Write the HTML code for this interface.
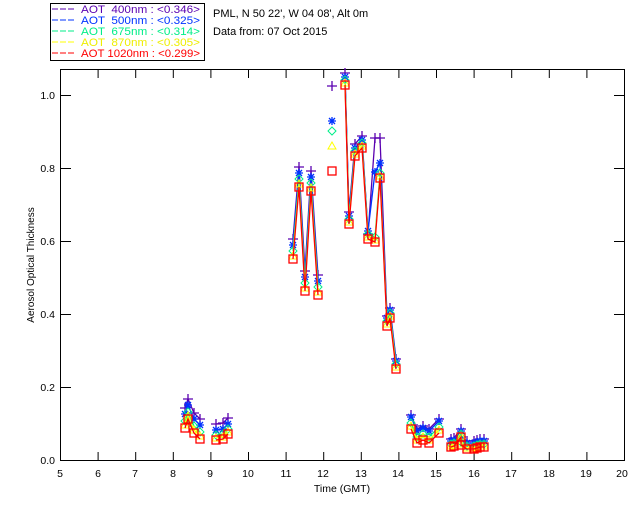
<!DOCTYPE html>
<html><head><meta charset="utf-8"><style>
html,body{margin:0;padding:0;background:#fff;width:640px;height:512px;overflow:hidden}
svg{display:block;font-family:"Liberation Sans","DejaVu Sans",sans-serif}
</style></head><body>
<svg id="s" width="640" height="512" viewBox="0 0 640 512" xmlns="http://www.w3.org/2000/svg">
<rect x="50.5" y="3.5" width="154" height="57" fill="#fff" stroke="#000" stroke-width="1"/>
<g font-size="11">
<line x1="52" y1="9" x2="74" y2="9" stroke="#5a00b0" stroke-dasharray="6,2"/>
<text x="81" y="13" fill="#5a00b0" textLength="119" lengthAdjust="spacingAndGlyphs" xml:space="preserve">AOT  400nm : &lt;0.346&gt;</text>
<line x1="52" y1="20" x2="74" y2="20" stroke="#0033ff" stroke-dasharray="6,2"/>
<text x="81" y="24" fill="#0033ff" textLength="119" lengthAdjust="spacingAndGlyphs" xml:space="preserve">AOT  500nm : &lt;0.325&gt;</text>
<line x1="52" y1="31" x2="74" y2="31" stroke="#00ee88" stroke-dasharray="6,2"/>
<text x="81" y="35" fill="#00ee88" textLength="119" lengthAdjust="spacingAndGlyphs" xml:space="preserve">AOT  675nm : &lt;0.314&gt;</text>
<line x1="52" y1="42" x2="74" y2="42" stroke="#ffff00" stroke-dasharray="6,2"/>
<text x="81" y="46" fill="#eeee00" textLength="119" lengthAdjust="spacingAndGlyphs" xml:space="preserve">AOT  870nm : &lt;0.305&gt;</text>
<line x1="52" y1="53" x2="74" y2="53" stroke="#ff0000" stroke-dasharray="6,2"/>
<text x="81" y="57" fill="#ff0000" textLength="119" lengthAdjust="spacingAndGlyphs" xml:space="preserve">AOT 1020nm : &lt;0.299&gt;</text>
</g>
<text x="213" y="17" font-size="11">PML, N 50 22', W 04 08', Alt 0m</text>
<text x="213" y="35" font-size="11">Data from: 07 Oct 2015</text>
<rect x="60.5" y="69.5" width="564" height="391" fill="none" stroke="#000"/>
<g id="ax" stroke="#000"></g>
<g font-size="10.5" text-anchor="end">
<text x="55" y="99">1.0</text><text x="55" y="172">0.8</text><text x="55" y="245">0.6</text>
<text x="55" y="318">0.4</text><text x="55" y="391">0.2</text><text x="55" y="464">0.0</text>
</g>
<g font-size="10.5" text-anchor="middle">
<text x="60" y="477">5</text><text x="98" y="477">6</text><text x="135" y="477">7</text><text x="173" y="477">8</text><text x="210" y="477">9</text><text x="248" y="477">10</text><text x="286" y="477">11</text><text x="323" y="477">12</text><text x="361" y="477">13</text><text x="398" y="477">14</text><text x="436" y="477">15</text><text x="474" y="477">16</text><text x="511" y="477">17</text><text x="549" y="477">18</text><text x="586" y="477">19</text><text x="622" y="477">20</text>
<text x="342" y="492">Time (GMT)</text>
<text transform="translate(34,265) rotate(-90)" font-size="10">Aerosol Optical Thickness</text>
</g>
<g id="d"></g>
</svg>
<script>
var NS="http://www.w3.org/2000/svg";
function el(p,t,a){var e=document.createElementNS(NS,t);for(var k in a)e.setAttribute(k,a[k]);p.appendChild(e);return e;}
var ax=document.getElementById('ax');
for(var i=0;i<=15;i++){var x=60.5+i*37.6;el(ax,'line',{x1:x,y1:461,x2:x,y2:452});el(ax,'line',{x1:x,y1:70,x2:x,y2:78});}
for(var j=0;j<=5;j++){var y=460.5-j*73;el(ax,'line',{x1:60,y1:y,x2:71,y2:y});el(ax,'line',{x1:625,y1:y,x2:614,y2:y});}
var groups=[
[[185,428],[188,419],[194,433],[200,439]],
[[216,440],[223,439],[228,434]],
[[293,259],[299,187],[305,291],[311,191],[318,295]],
[[332,171]],
[[345,85],[349,224],[355,156],[362,148],[368,239],[375,242],[380,178],[387,326],[390,318],[396,369]],
[[411,429],[417,443],[423,440],[429,443],[439,433]],
[[451,447],[454,446],[461,437],[461,445],[467,449],[474,449],[477,448],[480,447],[484,447]]
];
var cols=['#5a00b0','#0033ff','#00ee88','#ffff00','#ff0000'];
var offs=[[-20,-16,-20,-10,-12,-14,-8],[-14,-10,-14,-6,-8,-12,-6],[-7,-5,-8,-3,-5,-6,-3],[-3,-2,-3,-1,-2,-3,-1],[0,0,0,0,0,0,0]];
var d=document.getElementById('d');
for(var s=0;s<5;s++){
 var g=el(d,'g',{});
 for(var gi=0;gi<groups.length;gi++){
  var pts=groups[gi].map(function(p,k){var o=offs[s][gi];if(gi==3){o=[-85,-50,-40,-25,0][s];}
   if(gi==4&&s==0){o=[-12,-12,-12,-12,-5,-104,-40,-10,-10,-10][k];}
   if(gi==4&&s==1){o=[-8,-8,-8,-8,-8,-70,-15,-8,-8,-8][k];}
   return [p[0],p[1]+o];});
  if(pts.length>1)el(g,'polyline',{points:pts.map(function(p){return p.join(',')}).join(' '),fill:'none',stroke:cols[s],'stroke-width':1.3});
  pts.forEach(function(p){var x=p[0],y=p[1],c=cols[s];
   if(s==0){el(g,'path',{d:'M'+(x-5)+' '+y+'H'+(x+5)+'M'+x+' '+(y-5)+'V'+(y+5),stroke:c,'stroke-width':1.3,fill:'none'});}
   else if(s==1){el(g,'path',{d:'M'+(x-4)+' '+y+'H'+(x+4)+'M'+x+' '+(y-4)+'V'+(y+4)+'M'+(x-3)+' '+(y-3)+'L'+(x+3)+' '+(y+3)+'M'+(x-3)+' '+(y+3)+'L'+(x+3)+' '+(y-3),stroke:c,'stroke-width':1.3,fill:'none'});}
   else if(s==2){el(g,'path',{d:'M'+x+' '+(y-4)+'L'+(x+4)+' '+y+'L'+x+' '+(y+4)+'L'+(x-4)+' '+y+'Z',stroke:c,'stroke-width':1,fill:'none'});}
   else if(s==3){el(g,'path',{d:'M'+x+' '+(y-4)+'L'+(x+4)+' '+(y+3)+'L'+(x-4)+' '+(y+3)+'Z',stroke:c,'stroke-width':1,fill:'none'});}
   else {el(g,'rect',{x:x-4,y:y-4,width:8,height:8,stroke:c,'stroke-width':1.3,fill:'none'});}
  });
 }
}
</script>
</body></html>
